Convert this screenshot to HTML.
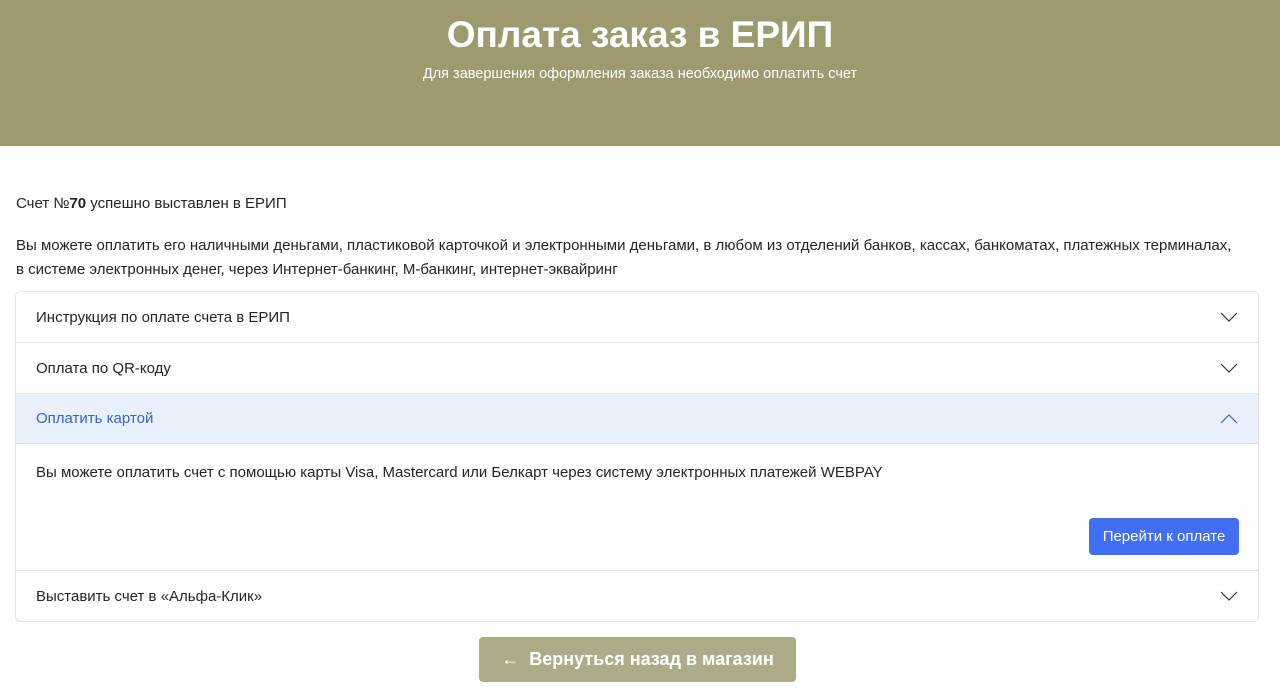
<!DOCTYPE html>
<html><head><meta charset="utf-8"><style>
*{box-sizing:border-box;margin:0;padding:0}
body{width:1280px;height:696px;overflow:hidden;background:#fff;font-family:"Liberation Sans",sans-serif;color:#212529;font-size:15px}
.hdr{height:146px;background:#9c9a6e;color:#fff;text-align:center;padding-top:13px}
.hdr h1{font-size:37px;font-weight:bold;line-height:44px}
.hdr p{font-size:14.5px;margin-top:9px}
.p1{position:absolute;left:16px;top:195px}
.p2{position:absolute;left:16px;top:234px;line-height:24px;width:1220px}
.acc{position:absolute;left:15px;top:291px;width:1244px;border:1px solid #e3e3e3;border-radius:5px;overflow:hidden}
.it{height:51px;border-bottom:1px solid #e3e3e3;display:flex;align-items:center;padding:0 20px;justify-content:space-between}
.it.act{background:#e8f0fc;color:#3c5fd0;height:50px;border-bottom:1px solid #d8dee8}
.body{height:127px;border-bottom:1px solid #e3e3e3;position:relative;padding:20px}
.btn{position:absolute;right:19px;bottom:15px;background:#416ff4;color:#fff;border-radius:4px;width:150px;height:37px;font-size:15px;display:flex;align-items:center;justify-content:center}
.it:last-child{border-bottom:none;height:50px}
.back{position:absolute;left:479px;top:637px;width:317px;height:45px;background:#aeac88;color:#fff;border-radius:4px;font-size:18px;font-weight:bold;display:flex;align-items:center;justify-content:center}
</style></head><body>
<div class="hdr"><h1>Оплата заказ в ЕРИП</h1><p>Для завершения оформления заказа необходимо оплатить счет</p></div>
<div class="p1">Счет №<b>70</b> успешно выставлен в ЕРИП</div>
<div class="p2">Вы можете оплатить его наличными деньгами, пластиковой карточкой и электронными деньгами, в любом из отделений банков, кассах, банкоматах, платежных терминалах, в системе электронных денег, через Интернет-банкинг, М-банкинг, интернет-эквайринг</div>
<div class="acc">
<div class="it"><span>Инструкция по оплате счета в ЕРИП</span><svg width="18" height="10"><path d="M1 1l8 8 8-8" fill="none" stroke="#333" stroke-width="1.2"/></svg></div>
<div class="it"><span>Оплата по QR-коду</span><svg width="18" height="10"><path d="M1 1l8 8 8-8" fill="none" stroke="#333" stroke-width="1.2"/></svg></div>
<div class="it act"><span>Оплатить картой</span><svg width="18" height="10"><path d="M1 9l8-8 8 8" fill="none" stroke="#3c5fd0" stroke-width="1.2"/></svg></div>
<div class="body">Вы можете оплатить счет с помощью карты Visa, Mastercard или Белкарт через систему электронных платежей WEBPAY<div class="btn">Перейти к оплате</div></div>
<div class="it"><span>Выставить счет в «Альфа-Клик»</span><svg width="18" height="10"><path d="M1 1l8 8 8-8" fill="none" stroke="#333" stroke-width="1.2"/></svg></div>
</div>
<div class="back">← &nbsp;Вернуться назад в магазин</div>
</body></html>
